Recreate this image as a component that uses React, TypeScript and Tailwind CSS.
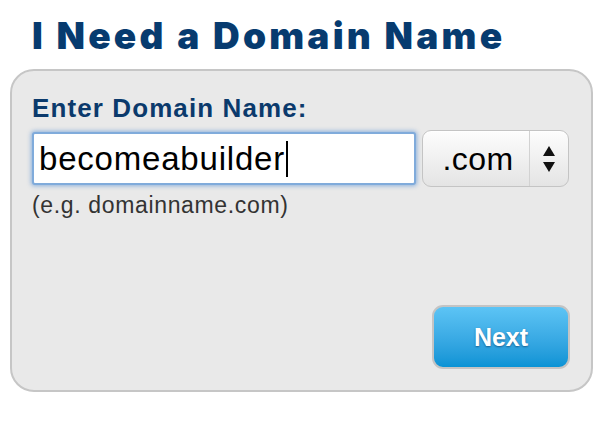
import React from "react";

function SelectArrows() {
  return (
    <svg width="16" height="30" viewBox="0 0 16 30" aria-hidden="true">
      <path d="M8 2 L14 12 L2 12 Z" fill="#111" />
      <path d="M8 28 L14 18 L2 18 Z" fill="#111" />
    </svg>
  );
}

export default function App() {
  return (
    <div className="h-[426px] w-[610px] bg-white px-[10px] font-['Liberation_Sans',Arial,sans-serif]">
      <h1 className="pl-[22px] pt-[17px] font-['Inter',sans-serif] text-[37px] font-black leading-none tracking-[3.2px] text-[#073b6f]">
        I Need a Domain Name
      </h1>

      <div className="mt-[15px] flex h-[323px] w-[583px] flex-col rounded-[24px] border-2 border-[#c6c6c6] bg-[#e9e9e9] pl-[20px] pr-[21px] pb-[21px] pt-[24px]">
        <label className="text-[26px] font-bold leading-none tracking-[1.1px] text-[#0b3a6c]">
          Enter Domain Name:
        </label>

        <div className="mt-[9px] flex items-center gap-[6px]">
          <div className="flex h-[53px] w-[384px] items-center rounded-[3px] border-2 border-[#80abdb] bg-white pl-[5px] shadow-[0_0_4px_1px_rgba(80,140,210,0.6)]">
            <span className="text-[33px] leading-none tracking-[0.8px] text-black">becomeabuilder</span>
            <span className="ml-[1px] h-[36px] w-[2px] bg-black" />
          </div>

          <div className="flex h-[57px] w-[147px] items-stretch rounded-[9px] border border-[#c4c4c4] bg-gradient-to-b from-[#fdfdfd] to-[#e4e4e4] shadow-[inset_0_1px_0_#fff]">
            <div className="flex w-[106px] items-center justify-center pl-[4px] text-[32px] leading-none tracking-[0.4px] text-black">
              .com
            </div>
            <div className="flex flex-1 items-center justify-center border-l border-[#d2d2d2]">
              <SelectArrows />
            </div>
          </div>
        </div>

        <p className="mt-[7px] text-[23px] leading-none tracking-[0.65px] text-[#333]">
          (e.g. domainname.com)
        </p>

        <div className="mt-auto flex justify-end">
          <button className="flex h-[64px] w-[138px] items-center justify-center rounded-[11px] border-2 border-[#c4c4c4] bg-gradient-to-b from-[#5cc4f5] to-[#0893d5] text-[25px] font-bold leading-none text-white [text-shadow:0_1px_2px_rgba(0,40,80,0.55)]">
            Next
          </button>
        </div>
      </div>
    </div>
  );
}
